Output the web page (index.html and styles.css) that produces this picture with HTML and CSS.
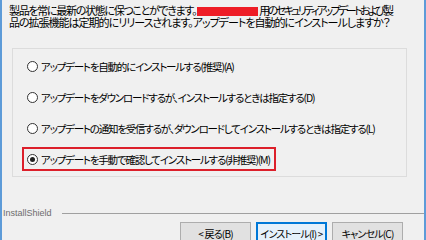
FILE: index.html
```html
<!DOCTYPE html>
<html lang="ja">
<head>
    <meta charset="UTF-8">
    <title>InstallShield</title>
    <link rel="stylesheet" href="styles.css">
</head>
<body>
<div class="window">
    <!-- "Intro text" -->
    <p class="intro"><span class="lead">製品を常に最新の状態に保つことができます。</span><span class="redacted"></span><span class="tight">用のセキュリティアップデートおよび製</span><br>品の拡張機能は定期的にリリースされます。アップデートを自動的にインストールしますか？</p>

    <!-- "Update options" -->
    <div class="group">
        <label class="option"><span class="radio"></span>アップデートを自動的にインストールする(推奨)(A)</label>
        <label class="option"><span class="radio"></span>アップデートをダウンロードするが、インストールするときは指定する(D)</label>
        <label class="option"><span class="radio"></span>アップデートの通知を受信するが、ダウンロードしてインストールするときは指定する(L)</label>
        <label class="option selected"><span class="radio checked"></span>アップデートを手動で確認してインストールする(非推奨)(M)</label>
    </div>

    <!-- "Footer" -->
    <div class="brand">
        <span>InstallShield</span>
        <div class="rule"></div>
    </div>
    <div class="buttons">
        <button type="button">&lt; 戻る(B)</button>
        <button type="button" class="default">インストール(I) &gt;</button>
        <button type="button">キャンセル(C)</button>
    </div>
</div>
</body>
</html>
```
FILE: styles.css
```css
/* "Global styles" */
body {
    margin: 0;
    width: 426px;
    height: 240px;
    overflow: hidden;
    background-color: #f0f0f0;
    font-family: "Noto Sans CJK JP", sans-serif;
    font-feature-settings: "palt";
    color: #000;
}

.window {
    height: 240px;
    box-sizing: border-box;
    border-left: 2px solid #5d9bd8;
    border-right: 2px solid #5d9bd8;
}

/* "Intro text" */
.intro {
    margin: 0;
    padding: 4px 0 0 7px;
    font-size: 11px;
    line-height: 12px;
    letter-spacing: -1px;
    white-space: nowrap;
}

.lead {
    letter-spacing: -1.3px;
}

.tight {
    letter-spacing: -2.6px;
}

.redacted {
    display: inline-block;
    width: 61px;
    height: 9px;
    margin: 0 1px 0 1px;
    background-color: #ee1c25;
    vertical-align: -1px;
}

/* "Group box" */
.group {
    margin: 20px 0 0 10px;
    width: 395px;
    height: 129px;
    box-sizing: border-box;
    border: 1px solid #dcdcdc;
    padding: 5px 0 0 9px;
    display: flex;
    flex-direction: column;
    gap: 7px;
}

.option {
    display: flex;
    align-items: center;
    gap: 3px;
    height: 24px;
    padding: 0 4px 0 3px;
    box-sizing: border-box;
    align-self: flex-start;
    font-size: 10.5px;
    letter-spacing: -1.2px;
    border: 2px solid transparent;
}

.option.selected {
    border-color: #dc1f2a;
}

.radio {
    flex: none;
    width: 11px;
    height: 11px;
    box-sizing: border-box;
    border: 1px solid #333;
    border-radius: 50%;
    background-color: #fff;
    position: relative;
}

.radio.checked::after {
    content: "";
    position: absolute;
    left: 2px;
    top: 2px;
    width: 5px;
    height: 5px;
    border-radius: 50%;
    background-color: #222;
}

/* "Footer" */
.brand {
    display: flex;
    align-items: center;
    gap: 10px;
    margin-top: 31px;
    padding-left: 1px;
    font-family: "Liberation Sans", sans-serif;
    font-size: 9px;
    color: #6d6d6d;
}

.rule {
    flex: 1;
    border-top: 1px solid #a0a0a0;
}

.buttons {
    display: flex;
    gap: 5px;
    margin: 4px 0 0 178px;
}

button {
    width: 71px;
    height: 23px;
    padding: 0;
    font-family: "Noto Sans CJK JP", sans-serif;
    font-feature-settings: "palt";
    font-size: 10px;
    letter-spacing: -0.8px;
    white-space: nowrap;
    background-color: #e1e1e1;
    border: 1px solid #adadad;
    color: #000;
}

button.default {
    background-color: #e5f1fb;
    border: 2px solid #0078d7;
}
```
